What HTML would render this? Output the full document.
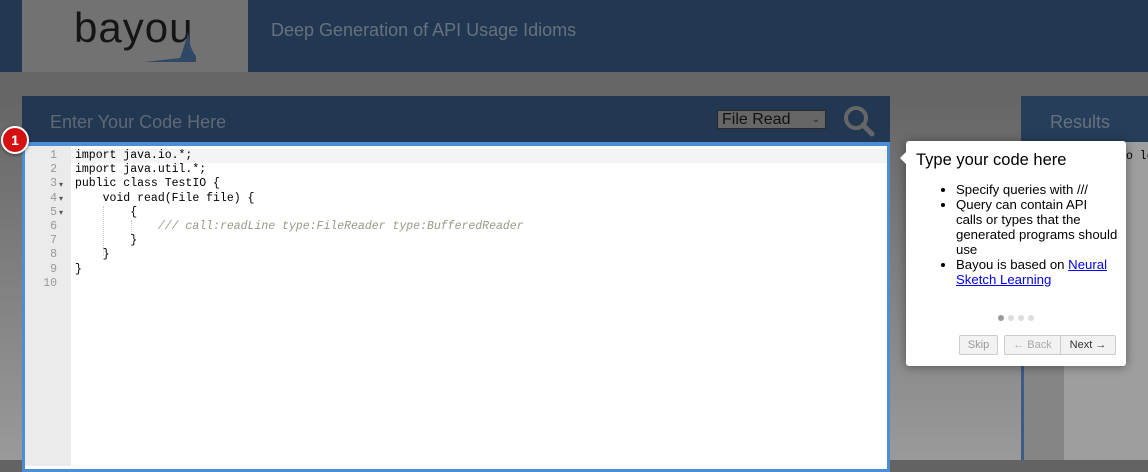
<!DOCTYPE html>
<html><head><style>
body{margin:0;width:1148px;height:460px;overflow:hidden;position:relative;font-family:"Liberation Sans",sans-serif;background:linear-gradient(#636363,#666 100px,#9a9a9a 460px);}
.abs{position:absolute}
.code{font-family:"Liberation Mono",monospace;font-size:11.5px;line-height:14.2px;white-space:pre;color:#000}
.ln{font-family:"Liberation Mono",monospace;font-size:11.5px;line-height:14.2px;color:#999;text-align:right;white-space:pre}
ul{margin:0;padding-left:14px}
li{margin:0}
</style></head><body>
<div class="abs" style="left:0;top:0;width:1148px;height:72px;background:#223852"></div>
<div class="abs" style="left:22px;top:0;width:226px;height:72px;background:#727272"></div>
<div class="abs" style="left:74px;top:4px;font-size:42px;color:#151515;font-family:'Liberation Sans',sans-serif;letter-spacing:1px">bayou</div>
<svg class="abs" style="left:140px;top:28px" width="60" height="36"><path d="M5 34 L40 30 Q44 20 48 4 Q50 22 56 28 L56 34Z" fill="#2f4866"/></svg>
<div class="abs" style="left:271px;top:20px;font-size:18px;color:#66717e">Deep Generation of API Usage Idioms</div>

<div class="abs" style="left:22px;top:96px;width:868px;height:46px;background:#223852"></div>
<div class="abs" style="left:50px;top:112px;font-size:18px;color:#5f6874">Enter Your Code Here</div>
<div class="abs" style="left:717px;top:110px;width:109px;height:19px;background:#666;border:1px solid #2a2a2a;box-sizing:border-box;font-size:16px;color:#111;padding-left:4px;line-height:17px">File Read<span style="position:absolute;right:5px;top:0;font-size:10px;color:#222">&#8964;</span></div>
<svg class="abs" style="left:842px;top:104px" width="34" height="34"><circle cx="14" cy="14" r="10" fill="none" stroke="#666" stroke-width="4"/><path d="M21 21 L30 30" stroke="#666" stroke-width="5" stroke-linecap="round"/></svg>

<div class="abs" style="left:22px;top:142px;width:868px;height:330px;background:#fff;border:3px solid #4a8fd6;box-sizing:border-box;border-top-width:4px"></div>
<div class="abs" style="left:25px;top:146px;width:46px;height:320px;background:#ebebeb"></div>
<div class="abs" style="left:71px;top:149px;width:816px;height:14px;background:#f4f4f4"></div>
<div class="abs ln" style="left:25px;top:149px;width:32px">1
2
3
4
5
6
7
8
9
10</div>
<div class="abs" style="left:59px;top:178px;font-size:8px;color:#555;line-height:14.2px;white-space:pre">▾
▾
▾</div>
<div class="abs" style="left:103px;top:206px;height:50px;border-left:1px dotted #ccc"></div>
<div class="abs" style="left:131px;top:220px;height:14px;border-left:1px dotted #ccc"></div>
<div class="abs code" style="left:75px;top:149px">import java.io.*;
import java.util.*;
public class TestIO {
    void read(File file) {
        {
            <span style="color:#999988;font-style:italic">/// call:readLine type:FileReader type:BufferedReader</span>
        }
    }
}</div>

<div class="abs" style="left:1021px;top:96px;width:127px;height:46px;background:#263e5a"></div>
<div class="abs" style="left:1050px;top:112px;font-size:18px;color:#66717e">Results</div>
<div class="abs" style="left:1021px;top:142px;width:3px;height:318px;background:#3c5c86"></div>
<div class="abs" style="left:1024px;top:142px;width:40px;height:318px;background:#858585"></div>
<div class="abs" style="left:1064px;top:142px;width:84px;height:318px;background:#9e9e9e"></div>
<div class="abs code" style="left:1126px;top:150px">o lo</div>

<div class="abs" style="left:906px;top:141px;width:220px;height:225px;background:#fff;border-radius:3px;box-shadow:0 1px 10px rgba(0,0,0,.4)"></div>
<div class="abs" style="left:900px;top:152px;width:0;height:0;border-top:6px solid transparent;border-bottom:6px solid transparent;border-right:6px solid #fff"></div>
<div class="abs" style="left:916px;top:151px;font-size:16.5px;color:#000">Type your code here</div>
<div class="abs" style="left:942px;top:182px;font-size:13.2px;line-height:15px;color:#000;width:177px">
<ul>
<li>Specify queries with ///</li>
<li>Query can contain API<br>calls or types that the<br>generated programs should<br>use</li>
<li>Bayou is based on <span style="color:#00e;text-decoration:underline">Neural<br>Sketch Learning</span></li>
</ul>
</div>
<div class="abs" style="left:998px;top:315px;width:6px;height:6px;border-radius:3px;background:#999"></div>
<div class="abs" style="left:1008px;top:315px;width:6px;height:6px;border-radius:3px;background:#ddd"></div>
<div class="abs" style="left:1018px;top:315px;width:6px;height:6px;border-radius:3px;background:#ddd"></div>
<div class="abs" style="left:1028px;top:315px;width:6px;height:6px;border-radius:3px;background:#ddd"></div>
<div class="abs" style="left:959px;top:335px;width:39px;height:20px;border:1px solid #ccc;border-radius:2px;box-sizing:border-box;background:#f2f2f2;font-size:11px;color:#999;text-align:center;line-height:18px">Skip</div>
<div class="abs" style="left:1004px;top:335px;width:57px;height:20px;border:1px solid #ccc;border-radius:2px 0 0 2px;box-sizing:border-box;background:#f2f2f2;font-size:11px;color:#aaa;text-align:center;line-height:18px">← Back</div>
<div class="abs" style="left:1060px;top:335px;width:56px;height:20px;border:1px solid #ccc;border-radius:0 2px 2px 0;box-sizing:border-box;background:#f2f2f2;font-size:11px;color:#333;text-align:center;line-height:18px">Next →</div>

<div class="abs" style="left:1px;top:126px;width:28px;height:28px;border-radius:50%;background:#d41010;border:2px solid #fff;box-sizing:border-box;box-shadow:0 1px 3px rgba(0,0,0,.5);color:#fff;font-weight:bold;font-size:14px;text-align:center;line-height:24px">1</div>
</body></html>
